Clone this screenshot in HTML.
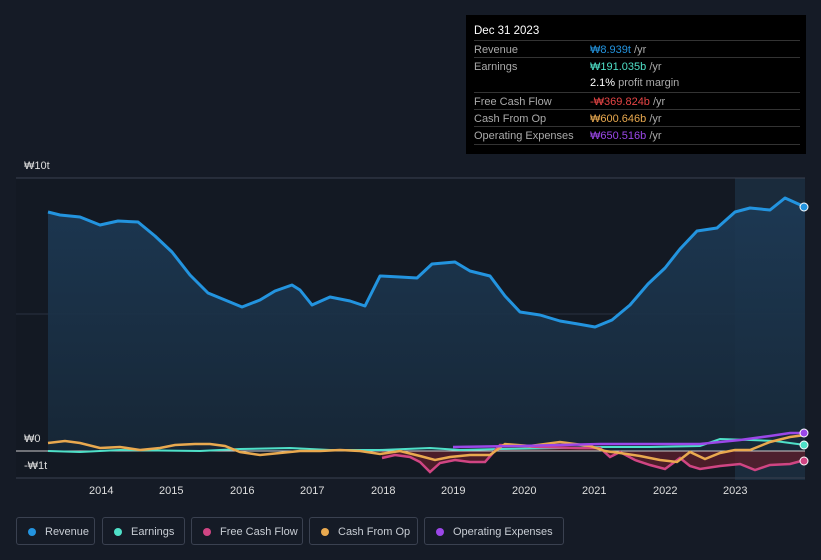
<!DOCTYPE html>
<html><head><meta charset="utf-8"><style>
body{margin:0;width:821px;height:560px;background:#151b26;font-family:"Liberation Sans",sans-serif;position:relative;overflow:hidden}
.tip{position:absolute;left:466px;top:15px;width:340px;height:139px;background:#000;color:#fff;font-size:11px}
.tip .h{position:absolute;left:8px;top:10px;font-size:11.5px}
.row{position:absolute;left:8px;width:326px;border-top:1px solid #333;height:17px}
.row span{position:absolute;top:3px}
.l{left:0;color:#aaa}.v{left:116px}
.leg{position:absolute;top:517px;height:28px;border:1px solid #3a4150;border-radius:3px;color:#c8cdd4;font-size:11px;line-height:28px;box-sizing:border-box;padding-left:28px}
.leg i{position:absolute;left:11px;top:10px;width:8px;height:8px;border-radius:50%}
.ax{position:absolute;color:#ddd;font-size:11px}
</style></head><body>
<svg width="821" height="560" style="position:absolute;left:0;top:0">
<defs><linearGradient id="g" x1="0" y1="0" x2="0" y2="1"><stop offset="0" stop-color="#1d3a56"/><stop offset="1" stop-color="#172838"/></linearGradient></defs>
<rect x="16" y="178" width="789" height="300" fill="#131923"/>
<rect x="735" y="178" width="70" height="302" fill="#1a2b3c"/>
<line x1="16" y1="178" x2="805" y2="178" stroke="#3a4150"/>
<line x1="16" y1="314" x2="805" y2="314" stroke="#2a3140"/>
<path d="M48,212 L60,215 80,217 100,225 118,221 138,222 155,236 172,252 190,275 208,293 225,300 242,307 260,300 275,291 292,285 300,290 312,305 330,297 350,301 365,306 380,276 400,277 417,278 432,264 455,262 470,271 490,276 505,296 520,312 540,315 560,321 578,324 595,327 612,320 630,305 648,284 665,268 680,249 697,231 717,228 735,212 750,208 770,210 785,198 805,207 L805,451 L48,451Z" fill="url(#g)" opacity="0.9"/>
<path d="M382,458 L395,455 410,457 420,462 430,472 440,463 455,460 470,462 485,462 500,445 520,446 540,447 580,448 600,448 610,457 620,452 635,460 650,465 665,469 680,458 690,466 700,469 720,466 740,464 755,470 770,465 790,464 805,460 L805,451 L382,451Z" fill="#5a1e2a" opacity="0.8"/>
<line x1="16" y1="451" x2="805" y2="451" stroke="#ccc" stroke-width="1"/>
<line x1="16" y1="478" x2="805" y2="478" stroke="#3a4150"/>
<path d="M48,212 L60,215 80,217 100,225 118,221 138,222 155,236 172,252 190,275 208,293 225,300 242,307 260,300 275,291 292,285 300,290 312,305 330,297 350,301 365,306 380,276 400,277 417,278 432,264 455,262 470,271 490,276 505,296 520,312 540,315 560,321 578,324 595,327 612,320 630,305 648,284 665,268 680,249 697,231 717,228 735,212 750,208 770,210 785,198 805,207" fill="none" stroke="#2394df" stroke-width="3" stroke-linejoin="round"/>
<path d="M48,451 L80,452 120,450 200,451 240,449 290,448 330,450 380,450 430,448 460,450 500,449 560,448 600,447 650,447 700,446 720,439 750,440 775,441 805,445" fill="none" stroke="#4fe0c8" stroke-width="2"/>
<path d="M382,458 L395,455 410,457 420,462 430,472 440,463 455,460 470,462 485,462 500,445 520,446 540,447 580,448 600,448 610,457 620,452 635,460 650,465 665,469 680,458 690,466 700,469 720,466 740,464 755,470 770,465 790,464 805,460" fill="none" stroke="#d04583" stroke-width="2.5"/>
<path d="M48,443 L65,441 80,443 100,448 120,447 140,450 160,448 175,445 195,444 210,444 225,446 240,452 260,455 280,453 300,451 320,451 340,450 360,451 380,454 400,451 420,456 435,460 450,457 470,455 490,455 505,444 530,446 560,442 590,446 605,451 620,453 640,456 660,460 677,462 690,452 705,459 720,453 735,450 750,450 770,442 790,437 805,435" fill="none" stroke="#e9a94f" stroke-width="2.5"/>
<path d="M453,447 L520,446 600,444 700,444 740,440 770,436 790,433 805,433" fill="none" stroke="#9b47e8" stroke-width="2.5"/>
<circle cx="804" cy="207" r="4" fill="#2394df" stroke="#fff" stroke-width="1"/>
<circle cx="804" cy="433" r="4" fill="#9b47e8" stroke="#fff" stroke-width="1"/>
<circle cx="804" cy="445" r="4" fill="#4fe0c8" stroke="#fff" stroke-width="1"/>
<circle cx="804" cy="461" r="4" fill="#d04583" stroke="#fff" stroke-width="1"/>
</svg>
<div class="ax" style="left:24px;top:160px">₩10t</div>
<div class="ax" style="left:24px;top:433px">₩0</div>
<div class="ax" style="left:24px;top:460px">-₩1t</div>
<div class="ax" style="left:89px;top:485px">2014</div><div class="ax" style="left:159px;top:485px">2015</div><div class="ax" style="left:230px;top:485px">2016</div><div class="ax" style="left:300px;top:485px">2017</div><div class="ax" style="left:371px;top:485px">2018</div><div class="ax" style="left:441px;top:485px">2019</div><div class="ax" style="left:512px;top:485px">2020</div><div class="ax" style="left:582px;top:485px">2021</div><div class="ax" style="left:653px;top:485px">2022</div><div class="ax" style="left:723px;top:485px">2023</div>
<div class="tip"><div class="h">Dec 31 2023</div>
<div class="row" style="top:25px"><span class="l">Revenue</span><span class="v"><b style="color:#2394df;font-weight:normal">₩8.939t</b> <span style="position:static;color:#aaa">/yr</span></span></div>
<div class="row" style="top:42px"><span class="l">Earnings</span><span class="v"><b style="color:#4fe0c8;font-weight:normal">₩191.035b</b> <span style="position:static;color:#aaa">/yr</span></span></div>
<div class="row" style="top:59px;border-top:none"><span class="v">2.1% <span style="position:static;color:#aaa">profit margin</span></span></div>
<div class="row" style="top:77px"><span class="l">Free Cash Flow</span><span class="v"><b style="color:#e64545;font-weight:normal">-₩369.824b</b> <span style="position:static;color:#aaa">/yr</span></span></div>
<div class="row" style="top:94px"><span class="l">Cash From Op</span><span class="v"><b style="color:#e9a94f;font-weight:normal">₩600.646b</b> <span style="position:static;color:#aaa">/yr</span></span></div>
<div class="row" style="top:111px"><span class="l">Operating Expenses</span><span class="v"><b style="color:#9b47e8;font-weight:normal">₩650.516b</b> <span style="position:static;color:#aaa">/yr</span></span></div>
<div class="row" style="top:129px;height:0"></div>
</div>
<div class="leg" style="left:16px;width:79px"><i style="background:#2394df"></i>Revenue</div>
<div class="leg" style="left:102px;width:83px"><i style="background:#4fe0c8"></i>Earnings</div>
<div class="leg" style="left:191px;width:112px"><i style="background:#d04583"></i>Free Cash Flow</div>
<div class="leg" style="left:309px;width:109px"><i style="background:#e9a94f"></i>Cash From Op</div>
<div class="leg" style="left:424px;width:140px"><i style="background:#9b47e8"></i>Operating Expenses</div>
</body></html>
